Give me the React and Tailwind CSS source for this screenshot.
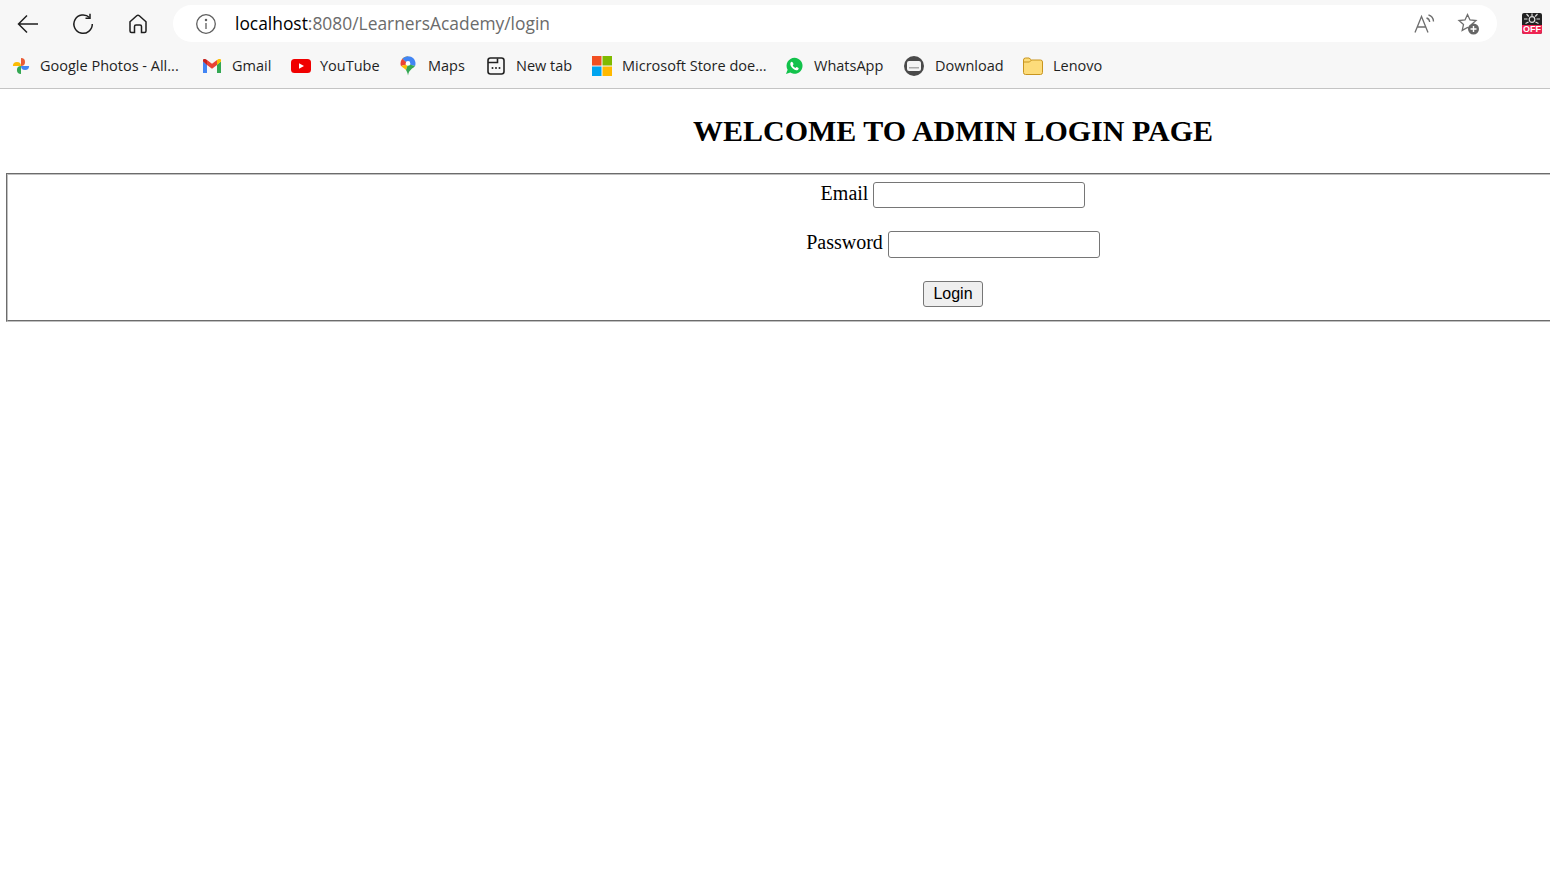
import { useState } from "react";

const chromeFont = "[font-family:'Open_Sans','Noto_Sans',sans-serif]";

function PhotosIcon() {
  return (
    <svg width="18" height="18" viewBox="0 0 20 20">
      <path d="M10 10V1a4.500 4.500 0 0 1 0 9z" fill="#ea5b35" />
      <path d="M10 10h9a4.500 4.500 0 0 1-9 0z" fill="#4285f4" />
      <path d="M10 10v9a4.500 4.500 0 0 1 0-9z" fill="#34a853" />
      <path d="M10 10H1a4.500 4.500 0 0 1 9 0z" fill="#fbbc04" />
    </svg>
  );
}

function GmailIcon() {
  return (
    <svg width="18" height="14" viewBox="0 0 18 14">
      <path d="M0 2.500V14h4V5.500z" fill="#4285f4" />
      <path d="M18 2.500V14h-4V5.500z" fill="#34a853" />
      <path d="M4 1v5l5 3.800L14 6V1L9 4.800z" fill="#ea4335" />
      <path d="M0 2.500 4 6V1L2.800.3A1.800 1.800 0 0 0 0 2.500z" fill="#c5221f" />
      <path d="M18 2.500 14 6V1l1.200-.7A1.800 1.800 0 0 1 18 2.500z" fill="#fbbc04" />
    </svg>
  );
}

function YoutubeIcon() {
  return (
    <svg width="20" height="14" viewBox="0 0 20 14">
      <rect width="20" height="14" rx="3.500" fill="#f00000" />
      <path d="M8 4.200 13 7l-5 2.800z" fill="#fff" />
    </svg>
  );
}

function MapsIcon() {
  return (
    <svg width="16" height="20" viewBox="0 0 16 20">
      <path d="M8 .2c-2.300 0-4.300 1-5.700 2.600L8 8z" fill="#fbbc04" />
      <path d="M8 .2c4.300 0 7.500 3.200 7.500 7.200 0 1-.2 1.800-.5 2.600L8 8 2.300 2.800C3.700 1.200 5.700.2 8 .2z" fill="#4285f4" />
      <path d="M2.300 2.800A7.300 7.300 0 0 0 .5 7.400c0 1 .2 1.900.6 2.700L8 8z" fill="#ea4335" />
      <path d="M1.100 10.100 8 8l-2 6c-1-1.300-3.900-2.400-4.900-3.900z" fill="#fbbc04" />
      <path d="M15 10 8 8l-2 6c.9 1.500 1.700 3 2 5.500.5-3.500 2.100-5 4-6.900A9 9 0 0 0 15 10z" fill="#34a853" />
      <circle cx="8" cy="7.400" r="2.300" fill="#fff" />
    </svg>
  );
}

function NewTabIcon() {
  return (
    <svg width="18" height="18" viewBox="0 0 18 18" fill="none" stroke="#222" strokeWidth="1.600">
      <rect x="1" y="1" width="16" height="16" rx="2.500" />
      <path d="M1 5.500h9.500V1.500" />
      <circle cx="5.500" cy="11" r="1" fill="#222" stroke="none" />
      <circle cx="9" cy="11" r="1" fill="#222" stroke="none" />
      <circle cx="12.500" cy="11" r="1" fill="#222" stroke="none" />
    </svg>
  );
}

function MicrosoftIcon() {
  return (
    <svg width="20" height="20" viewBox="0 0 20 20">
      <rect width="9.500" height="9.500" fill="#f25022" />
      <rect x="10.500" width="9.500" height="9.500" fill="#7fba00" />
      <rect y="10.500" width="9.500" height="9.500" fill="#00a4ef" />
      <rect x="10.500" y="10.500" width="9.500" height="9.500" fill="#ffb900" />
    </svg>
  );
}

function WhatsappIcon() {
  return (
    <svg width="18" height="18" viewBox="0 0 18 18">
      <path d="M9.500.8a8 8 0 0 0-6.900 12L1 17l4.300-1.400A8 8 0 1 0 9.500.8z" fill="#12c24b" />
      <path d="M6.700 4.800c-.4 0-1.400.7-1.400 2.200 0 2.500 3.300 6 6 6.200 1.500 0 2.400-1 2.400-1.800 0-.5-1.800-1.500-2.200-1.400-.4.100-.7 1-1.100.9-1-.3-2.300-1.500-2.600-2.500-.1-.4.700-.7.700-1.200 0-.4-1-2.400-1.800-2.400z" fill="#fff" />
    </svg>
  );
}

function DownloadIcon() {
  return (
    <svg width="20" height="20" viewBox="0 0 20 20">
      <circle cx="10" cy="10" r="10" fill="#4a4a4a" />
      <rect x="3" y="5" width="14" height="10" rx="2" fill="#f4f4f4" />
      <rect x="5" y="11" width="10" height="1.500" fill="#aaa" />
    </svg>
  );
}

function FolderIcon() {
  return (
    <svg width="20" height="18" viewBox="0 0 20 18">
      <path d="M.5 3a2 2 0 0 1 2-2h3.500l2.500 2h9a2 2 0 0 1 2 2v10.500a2 2 0 0 1-2 2h-15a2 2 0 0 1-2-2z" fill="#fddc7a" stroke="#c8951f" />
      <path d="M.5 5h6l2-2" fill="none" stroke="#c8951f" />
    </svg>
  );
}

const bookmarks = [
  { label: "Google Photos - All...", icon: <PhotosIcon />, width: "w-[191px]", slot: "w-[28px]" },
  { label: "Gmail", icon: <GmailIcon />, width: "w-[88px]", slot: "w-[29px]" },
  { label: "YouTube", icon: <YoutubeIcon />, width: "w-[109px]", slot: "w-[29px]" },
  { label: "Maps", icon: <MapsIcon />, width: "w-[87px]", slot: "w-[28px]" },
  { label: "New tab", icon: <NewTabIcon />, width: "w-[105px]", slot: "w-[29px]" },
  { label: "Microsoft Store doe...", icon: <MicrosoftIcon />, width: "w-[193px]", slot: "w-[30px]" },
  { label: "WhatsApp", icon: <WhatsappIcon />, width: "w-[119px]", slot: "w-[29px]" },
  { label: "Download", icon: <DownloadIcon />, width: "w-[119px]", slot: "w-[31px]" },
  { label: "Lenovo", icon: <FolderIcon />, width: "w-[90px]", slot: "w-[30px]" },
];

function Toolbar() {
  return (
    <div className={`h-[89px] shrink-0 bg-[#f7f7f7] border-b border-[#c4c4c4] ${chromeFont}`}>
      <div className="h-[47px] flex items-center pl-[17px]">
        <svg width="22" height="20" viewBox="0 0 22 20" fill="none" stroke="#1f1f1f" strokeWidth="1.500" className="mr-[33px]">
          <path d="M21 10H2M10 1.500 1.500 10l8.500 8.500" />
        </svg>
        <svg width="22" height="22" viewBox="0 0 22 22" fill="none" stroke="#1f1f1f" strokeWidth="1.500" className="mr-[34px]">
          <path d="M17.500 4.500A9.200 9.200 0 1 0 20.300 11" />
          <path d="M18 .8v4.400h-4.500" />
        </svg>
        <svg width="20" height="20" viewBox="0 0 20 20" fill="none" stroke="#1f1f1f" strokeWidth="1.500" className="mr-[25px]">
          <path d="M2 7.800 8.700 1.800a2 2 0 0 1 2.600 0L18 7.800v9.200a1.500 1.500 0 0 1-1.500 1.500H13.500v-6a1.500 1.500 0 0 0-1.500-1.500H8a1.500 1.500 0 0 0-1.500 1.500v6H3.500A1.500 1.500 0 0 1 2 17z" />
        </svg>
        <div className="w-[1324px] h-[37px] bg-white rounded-full flex items-center pl-[22px] pr-[16px]">
          <svg width="22" height="22" viewBox="0 0 22 22" fill="none" stroke="#5f5f5f" strokeWidth="1.300">
            <circle cx="11" cy="11" r="9.300" />
            <path d="M11 10v6" />
            <circle cx="11" cy="7" r=".6" fill="#5f5f5f" />
          </svg>
          <span className="ml-[18px] text-[17.400px] text-black whitespace-nowrap">
            localhost<span className="text-[#6b6b6b]">:8080/LearnersAcademy/login</span>
          </span>
          <div className="ml-auto flex items-center gap-[21px]">
            <svg width="22" height="20" viewBox="0 0 22 20" fill="none" stroke="#6e6e6e" strokeWidth="1.300">
              <path d="M1 18.500 7.500 2.500 14 18.500M3.500 13h8" />
              <path d="M12.500 4c2 .5 3 1.800 3.200 4M14.500 1c3 .7 4.800 3 5 6.500" />
            </svg>
            <svg width="24" height="24" viewBox="0 0 24 24" fill="none">
              <path d="M10.500 2.500 13 8l6 .6-4.500 4 1.300 5.800-5.300-3-5.300 3L6.500 12.600 2 8.600 8 8z" stroke="#6e6e6e" strokeWidth="1.300" />
              <circle cx="16.500" cy="17" r="5.500" fill="#666" />
              <path d="M16.500 14v6M13.500 17h6" stroke="#fff" strokeWidth="1.400" />
            </svg>
          </div>
        </div>
        <div className="ml-[25px] w-[20px] h-[21px] bg-[#222] rounded-[2px] flex flex-col justify-end overflow-hidden">
          <svg width="20" height="12" viewBox="0 0 20 12" fill="none" stroke="#ddd" strokeWidth="1.200">
            <circle cx="10" cy="6.500" r="2.800" />
            <path d="M10 .5v2.500M4.500 1l2.300 2.500M15.500 1l-2.300 2.500M2 6h3.500M18 6h-3.500M3.500 10.500 6.500 9M16.500 10.500 13.500 9" />
          </svg>
          <div className="h-[9px] bg-[#ee2452] text-white text-[9px] leading-[9px] font-bold text-center [font-family:'Liberation_Sans',sans-serif]">OFF</div>
        </div>
      </div>
      <div className="h-[38px] flex items-center pl-[12px] text-[14.500px] text-[#1f1f1f]">
        {bookmarks.map((b) => (
          <div key={b.label} className={`${b.width} shrink-0 flex items-center whitespace-nowrap`}>
            <div className={`${b.slot} shrink-0 flex items-center`}>{b.icon}</div>
            <span>{b.label}</span>
          </div>
        ))}
      </div>
    </div>
  );
}

function LoginPage() {
  const [email, setEmail] = useState("");
  const [password, setPassword] = useState("");
  const inputClass = "w-[212px] border border-[#767676] rounded-[3px] bg-white px-[2px] text-[13px] outline-none";

  return (
    <div className="w-[1894px] ml-[6px] [font-family:'Liberation_Serif',serif] text-black">
      <h1 className="h-[84px] pt-[23px] text-center text-[30px] leading-[37px] font-bold">WELCOME TO ADMIN LOGIN PAGE</h1>
      <fieldset className="h-[149px] border-2 [border-style:groove] border-[#c0c0c0] text-[20px] pt-[7px]">
        <div className="flex justify-center items-start gap-[5px]">
          <label className="leading-[23px]">Email</label>
          <input value={email} onChange={(e) => setEmail(e.target.value)} className={`${inputClass} h-[26px]`} />
        </div>
        <div className="flex justify-center items-start gap-[5px] mt-[23px]">
          <label className="leading-[23px]">Password</label>
          <input type="password" value={password} onChange={(e) => setPassword(e.target.value)} className={`${inputClass} h-[27px]`} />
        </div>
        <div className="flex justify-center mt-[23px]">
          <button className="w-[60px] h-[26px] bg-[#efefef] border border-[#767676] rounded-[3px] text-[16px] [font-family:'Liberation_Sans',sans-serif]">Login</button>
        </div>
      </fieldset>
    </div>
  );
}

export default function App() {
  return (
    <div className="w-[1550px] h-[886px] overflow-hidden bg-white flex flex-col">
      <Toolbar />
      <LoginPage />
    </div>
  );
}
